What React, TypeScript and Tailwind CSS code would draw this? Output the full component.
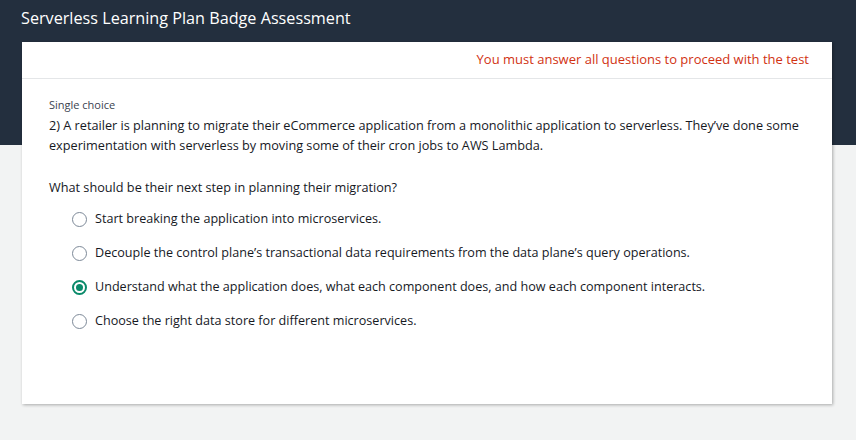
import { useState } from "react";

const options = [
  "Start breaking the application into microservices.",
  "Decouple the control plane’s transactional data requirements from the data plane’s query operations.",
  "Understand what the application does, what each component does, and how each component interacts.",
  "Choose the right data store for different microservices.",
];

function Radio({ checked }: { checked: boolean }) {
  return (
    <span
      className={`flex h-[15px] w-[15px] shrink-0 items-center justify-center rounded-full border ${
        checked ? "border-2 border-[#0a8a6a]" : "border-[#7d8998]"
      }`}
    >
      {checked && <span className="h-[7px] w-[7px] rounded-full bg-[#0a8a6a]" />}
    </span>
  );
}

export default function App() {
  const [selected, setSelected] = useState(2);

  return (
    <div className="min-h-[440px] bg-[#f2f3f3] font-['Open_Sans',sans-serif] text-[#16191f]">
      <div className="h-[145px] bg-[#232f3e] px-[21px] pt-[7px]">
        <h1 className="text-[16.2px] leading-[22px] text-white">Serverless Learning Plan Badge Assessment</h1>
      </div>

      <div className="mx-[22px] -mt-[103px] h-[362px] w-[810px] bg-white shadow-[1px_1px_3px_rgba(0,0,0,0.3)]">
        <div className="flex h-[37px] items-center justify-end border-b border-[#e4e6e8] pr-[23px]">
          <p className="text-[13px] text-[#d13212]">You must answer all questions to proceed with the test</p>
        </div>

        <div className="px-[27px] pt-[18px]">
          <div className="text-[11px] leading-[16px] text-[#3b4350]">Single choice</div>
          <p className="mt-[2px] text-[12.7px] leading-[20px]">
            2) A retailer is planning to migrate their eCommerce application from a monolithic application to
            serverless. They’ve done some experimentation with serverless by moving some of their cron jobs to AWS
            Lambda.
          </p>
          <p className="mt-[22px] text-[12.7px] leading-[20px]">What should be their next step in planning their migration?</p>

          <div className="mt-[12px] flex flex-col gap-[14px] pl-[23px]">
            {options.map((o, i) => (
              <label
                key={o}
                className="flex cursor-pointer items-center gap-[8px] text-[12.6px] leading-[20px]"
                onClick={() => setSelected(i)}
              >
                <Radio checked={selected === i} />
                <span>{o}</span>
              </label>
            ))}
          </div>
        </div>
      </div>
    </div>
  );
}
